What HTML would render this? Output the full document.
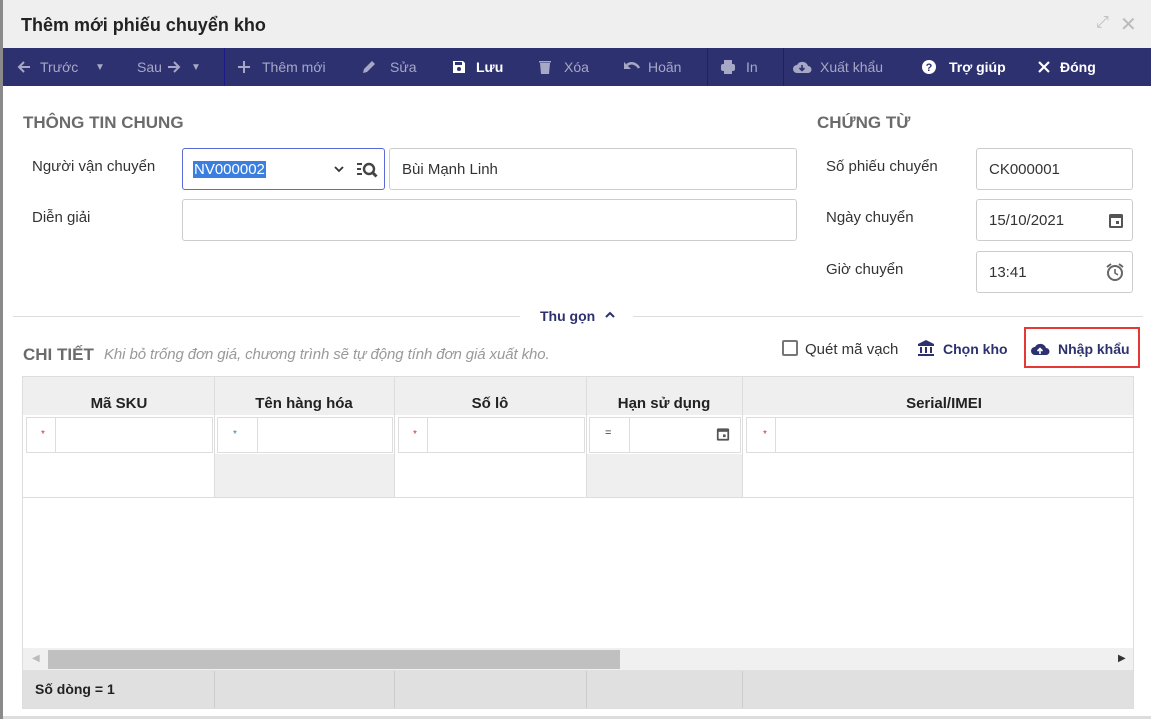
<!DOCTYPE html><html><head><meta charset="utf-8"><style>
*{box-sizing:border-box;margin:0;padding:0}
body{width:1151px;height:719px;overflow:hidden;background:#fff;font-family:"Liberation Sans",sans-serif;position:relative;color:#333}
.a{position:absolute}
.tb{position:absolute;top:48px;left:3px;width:1148px;height:38px;background:#2d3170;}
.tb span{position:absolute;top:11px;font-size:14px;color:#a6a8c6;white-space:nowrap}
.tb span.w{color:#fff;font-weight:bold}
.tb svg{position:absolute;top:11px}
.sep{position:absolute;top:0;width:1px;height:38px;background:#1d1a8a}
.lbl{position:absolute;font-size:15px;color:#333}
.inp{position:absolute;border:1px solid #ccc;border-radius:3px;background:#fff;font-size:15px;color:#333;padding-left:12px;display:flex;align-items:center}
.h{position:absolute;font-size:17px;font-weight:bold;color:#6b6b6b}
.vl{position:absolute;width:1px;background:#ddd}
.th{position:absolute;top:395px;font-size:15px;font-weight:bold;color:#222;transform:translateX(-50%);white-space:nowrap}
.st{position:absolute;top:429px;font-size:10px;color:#888}
.fb{position:absolute;top:417px;height:36px;border:1px solid #ddd;background:#fff}
</style></head><body>
<div class="a" style="left:0;top:0;width:3px;height:719px;background:#8a8a8a"></div>
<div class="a" style="left:3px;top:0;width:1148px;height:48px;background:#efefef"></div>
<div class="a" style="left:21px;top:15px;font-size:18px;font-weight:bold;color:#222">Thêm mới phiếu chuyển kho</div>
<div class="a" style="left:1096px;top:14px;font-size:16px;color:#bbb">⤢</div>
<div class="a" style="left:1120px;top:12px;font-size:20px;color:#bbb">✕</div>
<div class="tb">
<svg style="left:13px" width="16" height="16" viewBox="0 0 16 16"><path d="M14 8H3M8 3L3 8l5 5" stroke="#a6a8c6" stroke-width="2" fill="none"/></svg>
<span style="left:37px">Trước</span><span style="left:92px;font-size:10px;top:14px">▼</span>
<span style="left:134px">Sau</span>
<svg style="left:163px" width="16" height="16" viewBox="0 0 16 16"><path d="M2 8h11M8 3l5 5-5 5" stroke="#a6a8c6" stroke-width="2" fill="none"/></svg>
<span style="left:188px;font-size:10px;top:14px">▼</span>
<div class="sep" style="left:221px"></div>
<svg style="left:233px" width="16" height="16" viewBox="0 0 16 16"><path d="M8 2v12M2 8h12" stroke="#a6a8c6" stroke-width="2"/></svg>
<span style="left:259px">Thêm mới</span>
<svg style="left:358px" width="16" height="16" viewBox="0 0 16 16"><path d="M2 14l1-4 8-8 3 3-8 8z" fill="#a6a8c6"/></svg>
<span style="left:387px">Sửa</span>
<svg style="left:449px" width="14" height="16" viewBox="0 0 14 16"><path d="M1 2h10l2 2v10H1z" fill="#fff"/><rect x="3" y="3" width="7" height="3" fill="#2d3170"/><circle cx="7" cy="10" r="2" fill="#2d3170"/></svg>
<span class="w" style="left:473px">Lưu</span>
<svg style="left:535px" width="14" height="16" viewBox="0 0 14 16"><path d="M2 4h10l-1 11H3zM1 2h12v1.5H1z" fill="#a6a8c6"/></svg>
<span style="left:561px">Xóa</span>
<svg style="left:620px" width="18" height="16" viewBox="0 0 18 16"><path d="M4 6c4-3 9-2 12 3" stroke="#a6a8c6" stroke-width="2.5" fill="none"/><path d="M1 3v7h7z" fill="#a6a8c6"/></svg>
<span style="left:645px">Hoãn</span>
<div class="sep" style="left:704px"></div>
<svg style="left:717px" width="16" height="16" viewBox="0 0 16 16"><rect x="4" y="1" width="8" height="4" fill="#a6a8c6"/><rect x="1" y="5" width="14" height="7" rx="2" fill="#a6a8c6"/><rect x="4" y="10" width="8" height="5" fill="#a6a8c6"/></svg>
<span style="left:743px">In</span>
<div class="sep" style="left:780px"></div>
<svg style="left:789px" width="20" height="16" viewBox="0 0 20 16"><path d="M5 14a4 4 0 010-8 6 6 0 0111 1 3.5 3.5 0 010 7z" fill="#a6a8c6"/><path d="M10 6v5M7.5 9l2.5 2.5L12.5 9" stroke="#2d3170" stroke-width="1.6" fill="none"/></svg>
<span style="left:817px">Xuất khẩu</span>
<svg style="left:918px" width="16" height="16" viewBox="0 0 16 16"><circle cx="8" cy="8" r="7" fill="#fff"/><text x="8" y="12" font-size="11" font-weight="bold" text-anchor="middle" fill="#2d3170" font-family="Liberation Sans">?</text></svg>
<span class="w" style="left:946px">Trợ giúp</span>
<svg style="left:1034px" width="14" height="16" viewBox="0 0 14 16"><path d="M2 3l10 10M12 3L2 13" stroke="#fff" stroke-width="2.2"/></svg>
<span class="w" style="left:1057px">Đóng</span>
</div>
<div class="h" style="left:23px;top:113px">THÔNG TIN CHUNG</div>
<div class="h" style="left:817px;top:113px">CHỨNG TỪ</div>
<div class="lbl" style="left:32px;top:158px">Người vận chuyển</div>
<div class="inp" style="left:182px;top:148px;width:203px;height:42px;border-color:#5b6ad6;padding-left:10px"><span style="background:#3a7fe0;color:#fff;padding:0 1px">NV000002</span>
<svg class="a" style="left:150px;top:15px" width="12" height="10" viewBox="0 0 12 10"><path d="M2 3l4 4 4-4" stroke="#333" stroke-width="1.8" fill="none"/></svg>
<svg class="a" style="left:173px;top:11px" width="24" height="20" viewBox="0 0 24 20"><path d="M1 4h5M1 9h4M1 14h5" stroke="#444" stroke-width="2"/><circle cx="13" cy="9" r="5" stroke="#444" stroke-width="2.4" fill="none"/><path d="M16.5 12.5l4 4" stroke="#444" stroke-width="3"/></svg></div>
<div class="inp" style="left:389px;top:148px;width:408px;height:42px">Bùi Mạnh Linh</div>
<div class="lbl" style="left:32px;top:209px">Diễn giải</div>
<div class="inp" style="left:182px;top:199px;width:615px;height:42px"></div>
<div class="lbl" style="left:826px;top:158px">Số phiếu chuyển</div>
<div class="inp" style="left:976px;top:148px;width:157px;height:42px">CK000001</div>
<div class="lbl" style="left:826px;top:209px">Ngày chuyển</div>
<div class="inp" style="left:976px;top:199px;width:157px;height:42px">15/10/2021<svg class="a" style="left:131px;top:12px" width="16" height="17" viewBox="0 0 16 17"><rect x="1" y="2" width="14" height="14" rx="1.5" fill="#555"/><rect x="3" y="6" width="10" height="8" fill="#fff"/><rect x="8" y="9" width="3" height="3" fill="#555"/></svg></div>
<div class="lbl" style="left:826px;top:261px">Giờ chuyển</div>
<div class="inp" style="left:976px;top:251px;width:157px;height:42px">13:41<svg class="a" style="left:128px;top:10px" width="20" height="20" viewBox="0 0 20 20"><circle cx="10" cy="11" r="7" stroke="#666" stroke-width="2" fill="none"/><path d="M10 7v4l3 2" stroke="#666" stroke-width="1.6" fill="none"/><path d="M2 5l4-3M18 5l-4-3" stroke="#666" stroke-width="2"/></svg></div>
<div class="a" style="left:13px;top:316px;width:507px;height:1px;background:#ddd"></div>
<div class="a" style="left:633px;top:316px;width:510px;height:1px;background:#ddd"></div>
<div class="a" style="left:540px;top:308px;font-size:14px;font-weight:bold;color:#2d3170">Thu gọn</div>
<svg class="a" style="left:604px;top:309px" width="12" height="12" viewBox="0 0 12 12"><path d="M2 8l4-4 4 4" stroke="#2d3170" stroke-width="2" fill="none"/></svg>
<div class="h" style="left:23px;top:345px">CHI TIẾT</div>
<div class="a" style="left:104px;top:346px;font-size:15px;font-style:italic;color:#999;letter-spacing:-0.1px">Khi bỏ trống đơn giá, chương trình sẽ tự động tính đơn giá xuất kho.</div>
<div class="a" style="left:782px;top:340px;width:16px;height:16px;border:2px solid #777;border-radius:2px"></div>
<div class="a" style="left:805px;top:341px;font-size:15px;color:#333">Quét mã vạch</div>
<svg class="a" style="left:917px;top:340px" width="18" height="16" viewBox="0 0 18 16"><path d="M9 0L1 4v2h16V4z" fill="#2d3170"/><rect x="3" y="7" width="2" height="6" fill="#2d3170"/><rect x="8" y="7" width="2" height="6" fill="#2d3170"/><rect x="13" y="7" width="2" height="6" fill="#2d3170"/><rect x="1" y="14" width="16" height="2" fill="#2d3170"/></svg>
<div class="a" style="left:943px;top:341px;font-size:14px;font-weight:bold;color:#2d3170">Chọn kho</div>
<div class="a" style="left:1024px;top:327px;width:116px;height:41px;border:2px solid #e53935"></div>
<svg class="a" style="left:1030px;top:341px" width="20" height="16" viewBox="0 0 20 16"><path d="M5 14a4 4 0 010-8 6 6 0 0111 1 3.5 3.5 0 010 7z" fill="#2d3170"/><path d="M10 13V8M7.5 10L10 7.5 12.5 10" stroke="#fff" stroke-width="1.6" fill="none"/></svg>
<div class="a" style="left:1058px;top:341px;font-size:14px;font-weight:bold;color:#2d3170">Nhập khẩu</div>
<div class="a" style="left:22px;top:376px;width:1112px;height:333px;border:1px solid #ddd;background:#fff"></div>
<div class="a" style="left:23px;top:377px;width:1110px;height:38px;background:#efefef"></div>
<div class="a" style="left:214px;top:454px;width:180px;height:43px;background:#efefef"></div>
<div class="a" style="left:586px;top:454px;width:156px;height:43px;background:#efefef"></div>
<div class="vl" style="left:214px;top:377px;height:120px"></div>
<div class="vl" style="left:394px;top:377px;height:120px"></div>
<div class="vl" style="left:586px;top:377px;height:120px"></div>
<div class="vl" style="left:742px;top:377px;height:120px"></div>
<div class="a" style="left:23px;top:497px;width:1110px;height:1px;background:#ddd"></div>
<div class="th" style="left:119px">Mã SKU</div>
<div class="th" style="left:304px">Tên hàng hóa</div>
<div class="th" style="left:490px">Số lô</div>
<div class="th" style="left:664px">Hạn sử dụng</div>
<div class="th" style="left:944px">Serial/IMEI</div>
<div class="fb" style="left:26px;width:30px"></div><div class="fb" style="left:55px;width:158px"></div>
<div class="fb" style="left:217px;width:41px"></div><div class="fb" style="left:257px;width:136px"></div>
<div class="fb" style="left:398px;width:30px"></div><div class="fb" style="left:427px;width:158px"></div>
<div class="fb" style="left:589px;width:41px"></div><div class="fb" style="left:629px;width:112px"></div>
<div class="fb" style="left:746px;width:30px"></div><div class="fb" style="left:775px;width:358px;border-right:none"></div>
<div class="st" style="left:41px;color:#c33">*</div><div class="st" style="left:233px;color:#28a">*</div><div class="st" style="left:413px;color:#c33">*</div><div class="st" style="left:605px;color:#333;font-size:11px;top:427px">=</div><div class="st" style="left:763px;color:#c33">*</div>
<svg class="a" style="left:716px;top:426px" width="14" height="16" viewBox="0 0 16 17"><rect x="1" y="2" width="14" height="14" rx="1.5" fill="#555"/><rect x="3" y="6" width="10" height="8" fill="#fff"/><rect x="8" y="9" width="3" height="3" fill="#555"/></svg>
<div class="a" style="left:23px;top:648px;width:1110px;height:22px;background:#f0f0f0"></div>
<div class="a" style="left:48px;top:650px;width:572px;height:19px;background:#c0c0c0"></div>
<div class="a" style="left:32px;top:653px;font-size:10px;color:#bbb">◀</div>
<div class="a" style="left:1118px;top:653px;font-size:10px;color:#333">▶</div>
<div class="a" style="left:23px;top:670px;width:1110px;height:38px;background:#e0e0e0"></div>
<div class="vl" style="left:214px;top:671px;height:37px;background:#ccc"></div>
<div class="vl" style="left:394px;top:671px;height:37px;background:#ccc"></div>
<div class="vl" style="left:586px;top:671px;height:37px;background:#ccc"></div>
<div class="vl" style="left:742px;top:671px;height:37px;background:#ccc"></div>
<div class="a" style="left:35px;top:681px;font-size:14px;font-weight:bold;color:#222">Số dòng = 1</div>
<div class="a" style="left:3px;top:716px;width:1148px;height:3px;background:#ddd"></div>
</body></html>
